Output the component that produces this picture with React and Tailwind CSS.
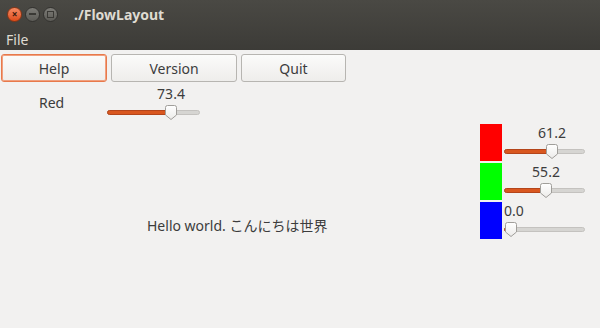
import React from 'react';

const FONT = { fontFamily: '"Noto Sans", "Open Sans", "Noto Sans CJK JP", sans-serif' };

const Handle = () => (
  <svg width="14" height="17" viewBox="0 0 14 17" className="block">
    <defs>
      <linearGradient id="hg" x1="0" y1="0" x2="0" y2="1">
        <stop offset="0" stopColor="#ffffff" />
        <stop offset="1" stopColor="#ecebe9" />
      </linearGradient>
    </defs>
    <path d="M1.5 3.5 Q1.5 1.5 3.5 1.5 H10.5 Q12.5 1.5 12.5 3.5 V11 L7 15.5 L1.5 11 Z" fill="url(#hg)" stroke="#a09e9a" strokeWidth="1" />
  </svg>
);

// handle = centre of the thumb in px from the slider's left edge
const Slider = ({ width, handle, label, labelLeft }) => (
  <div className="relative h-[37px]" style={{ width }}>
    <span
      className="absolute top-[1px] text-[14px] leading-[16px] text-[#3c3c3c] -translate-x-1/2"
      style={{ left: labelLeft ?? handle }}
    >
      {label}
    </span>
    <div className="absolute left-0 right-0 top-[25px] h-[5px] rounded-full bg-[#d6d5d2] border border-[#c4c2bf]" />
    <div
      className="absolute left-0 top-[25px] h-[5px] rounded-full bg-[#d9571f] border border-[#b4451a]"
      style={{ width: handle }}
    />
    <div className="absolute top-[19px] -translate-x-1/2" style={{ left: handle }}>
      <Handle />
    </div>
  </div>
);

const Button = ({ children, width, focused }) => (
  <button
    className={`h-[28px] rounded-[3px] border text-[14px] text-[#3c3c3c] bg-gradient-to-b from-[#fbfbfa] to-[#eeedeb] ${
      focused ? 'border-[#e8794b] shadow-[inset_0_0_0_1px_#f0a07f]' : 'border-[#b7b5b1]'
    }`}
    style={{ width }}
  >
    {children}
  </button>
);

export default function App() {
  return (
    <div className="w-[600px] h-[328px] flex flex-col bg-[#f2f1f0] overflow-hidden" style={FONT}>
      <div className="h-[50px] bg-gradient-to-b from-[#4a4944] to-[#3c3b37] flex flex-col">
        <div className="h-[28px] flex items-center pl-[7px]">
          <div className="flex items-center gap-[3px]">
            <div className="w-[15px] h-[15px] rounded-full bg-gradient-to-b from-[#f58a62] to-[#df4b16] border border-[#8a3515] flex items-center justify-center text-[#3a1a0d] text-[10px] leading-none font-bold">
              ×
            </div>
            <div className="w-[15px] h-[15px] rounded-full bg-gradient-to-b from-[#7d7c77] to-[#5c5b56] border border-[#33322f] flex items-center justify-center">
              <div className="w-[7px] h-[2px] bg-[#3a3935]" />
            </div>
            <div className="w-[15px] h-[15px] rounded-full bg-gradient-to-b from-[#7d7c77] to-[#5c5b56] border border-[#33322f] flex items-center justify-center">
              <div className="w-[7px] h-[7px] border-[1.5px] border-[#3a3935]" />
            </div>
          </div>
          <span className="ml-[16px] text-[14px] font-bold text-[#dfdbd2]">./FlowLayout</span>
        </div>
        <div className="h-[22px] flex items-center pl-[6px] text-[14px] text-[#dfdbd2]">File</div>
      </div>

      <div className="flex gap-[4px] pl-[1px] pt-[4px]">
        <Button width={106} focused>Help</Button>
        <Button width={126}>Version</Button>
        <Button width={105}>Quit</Button>
      </div>

      <div className="flex items-start mt-[3px]">
        <span className="ml-[39px] mt-[7px] w-[68px] text-[14px] text-[#3c3c3c]">Red</span>
        <Slider width={93} handle={64} label="73.4" />
      </div>

      <div className="flex items-start mt-[2px]">
        <span className="ml-[147px] mt-[91px] text-[14px] text-[#3c3c3c]">Hello world. こんにちは世界</span>
        <div className="ml-auto mr-[15px] flex flex-col gap-[2px]">
          {[
            { color: 'bg-[#ff0000]', handle: 48, label: '61.2' },
            { color: 'bg-[#00ff00]', handle: 42, label: '55.2' },
            { color: 'bg-[#0000ff]', handle: 7, label: '0.0', labelLeft: 10 },
          ].map((r) => (
            <div key={r.label} className="flex items-start gap-[2px]">
              <div className={`w-[22px] h-[37px] ${r.color}`} />
              <Slider width={81} handle={r.handle} label={r.label} labelLeft={r.labelLeft} />
            </div>
          ))}
        </div>
      </div>
    </div>
  );
}
